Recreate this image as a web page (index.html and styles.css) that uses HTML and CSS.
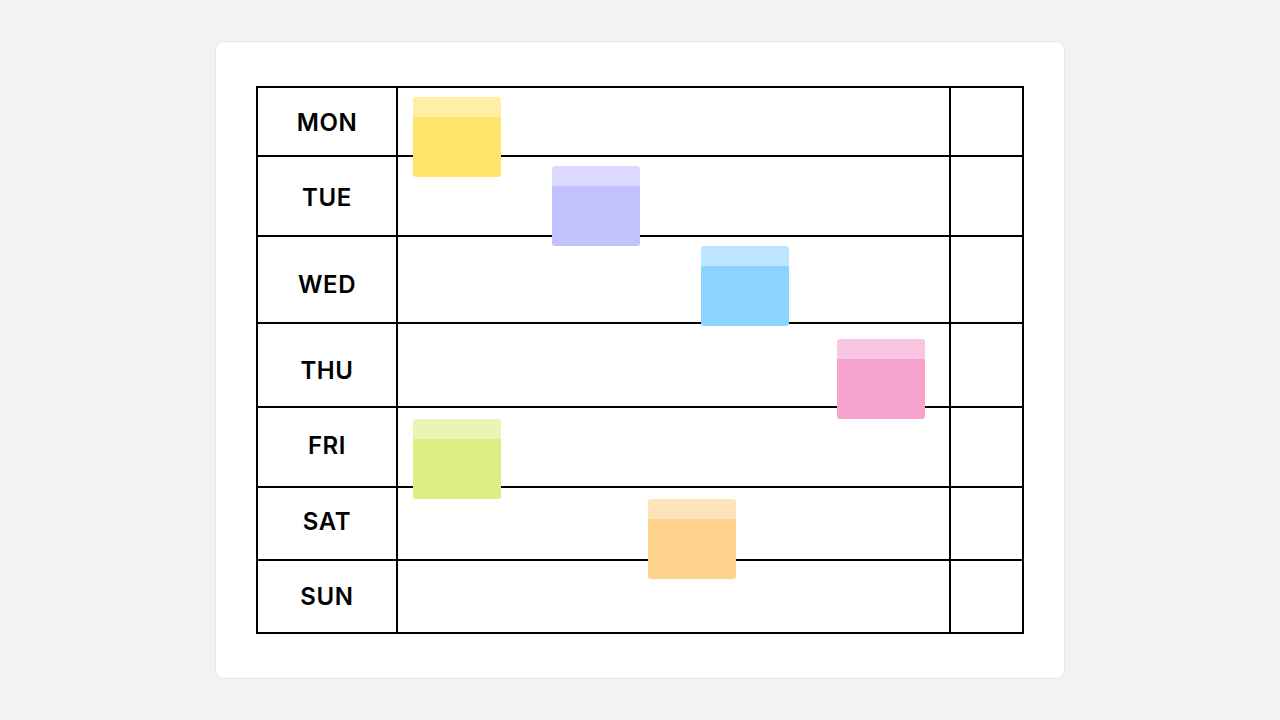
FILE: index.html
```html
<!DOCTYPE html>
<html>
<head>
<meta charset="utf-8">
<link rel="stylesheet" href="styles.css">
</head>
<body>
<div class="card">
  <div class="board">
    <table class="week">
      <tr class="r1"><th>MON</th><td></td><td class="end"></td></tr>
      <tr class="r2"><th>TUE</th><td></td><td class="end"></td></tr>
      <tr class="r3"><th>WED</th><td></td><td class="end"></td></tr>
      <tr class="r4"><th>THU</th><td></td><td class="end"></td></tr>
      <tr class="r5"><th>FRI</th><td></td><td class="end"></td></tr>
      <tr class="r6"><th>SAT</th><td></td><td class="end"></td></tr>
      <tr class="r7"><th>SUN</th><td></td><td class="end"></td></tr>
    </table>
    <div class="note yellow" style="left:157px;top:11px"></div>
    <div class="note purple" style="left:296px;top:80px"></div>
    <div class="note blue" style="left:445px;top:160px"></div>
    <div class="note pink" style="left:581px;top:253px"></div>
    <div class="note green" style="left:157px;top:333px"></div>
    <div class="note orange" style="left:392px;top:413px"></div>
  </div>
</div>
</body>
</html>
```
FILE: styles.css
```css
html, body {
  margin: 0;
  padding: 0;
}
body {
  background: #f2f2f2;
  width: 1280px;
  height: 720px;
  display: flex;
  align-items: center;
  justify-content: center;
  font-family: Inter, "Noto Sans", sans-serif;
}
.card {
  width: 850px;
  height: 638px;
  box-sizing: border-box;
  background: #ffffff;
  border: 1px solid #e6e6e6;
  border-radius: 9px;
  padding: 44px 40px;
}
.board {
  position: relative;
  width: 768px;
  height: 547px;
}
.week {
  border-collapse: collapse;
  width: 768px;
  table-layout: fixed;
}
.week th, .week td {
  border: 2px solid #000;
  padding: 0;
}
.week th {
  width: 138px;
  font-size: 24px;
  line-height: 28px;
  font-weight: 600;
  letter-spacing: 0.6px;
  color: #000;
  text-align: center;
}
.week td.end {
  width: 71px;
}
.r1 { height: 69px; }
.r2 { height: 80px; }
.r3 { height: 87px; }
.r4 { height: 84px; }
.r5 { height: 80px; }
.r6 { height: 73px; }
.r7 { height: 73px; }
.r1 th { padding-top: 2px; }
.r2 th { padding-top: 4px; }
.r3 th { padding-top: 10px; }
.r4 th { padding-top: 11px; }
.r5 th { padding-bottom: 2px; }
.r6 th { padding-bottom: 3px; }
.r7 th { padding-top: 1px; }
.note {
  position: absolute;
  width: 88px;
  height: 80px;
  border-radius: 3px;
}
.yellow { background: linear-gradient(#ffeea6 0 20px, #ffe46b 20px); }
.purple { background: linear-gradient(#dbd9ff 0 20px, #c4c1ff 20px); }
.blue { background: linear-gradient(#bce5ff 0 20px, #8dd3ff 20px); }
.pink { background: linear-gradient(#f9c6e2 0 20px, #f6a3cf 20px); }
.green { background: linear-gradient(#e9f5b4 0 20px, #dbee86 20px); }
.orange { background: linear-gradient(#ffe3ba 0 20px, #ffd28c 20px); }
```
